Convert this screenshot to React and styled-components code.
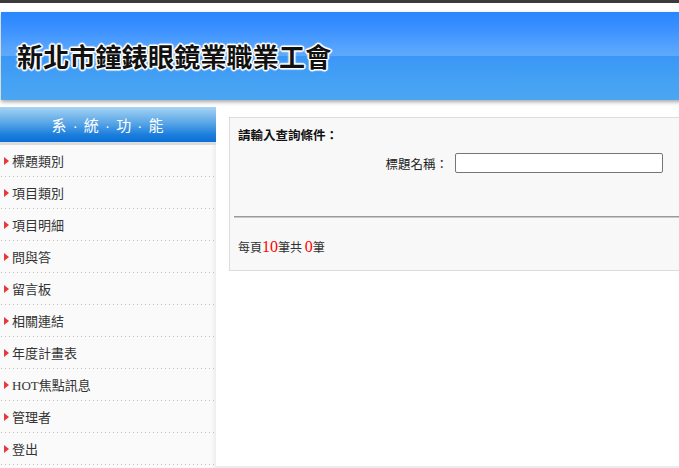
import React from "react";
import styled, { createGlobalStyle } from "styled-components";

const Global = createGlobalStyle`
  html, body { margin: 0; padding: 0; background: #fff; overflow: hidden; }
  body { font-family: "Noto Sans CJK TC", "Noto Sans", sans-serif; color: #222; }
`;

const Page = styled.div`
  width: 1000px;
`;

const TopBar = styled.div`
  height: 3px;
  background: #3b3b3b;
`;

const HeaderWrap = styled.div`
  padding-top: 9px;
`;

const Banner = styled.header`
  height: 88px;
  margin-left: 1px;
  display: flex;
  align-items: center;
  padding-left: 16px;
  background: linear-gradient(
    to bottom,
    #2886ff 0%,
    #3b91ff 20%,
    #55a3fd 40%,
    #5ea9fb 49.5%,
    #3a97f6 50.5%,
    #43a0f4 75%,
    #4ba6f2 100%
  );
  box-shadow: 0 2px 4px rgba(0, 0, 0, 0.35);
`;

const Title = styled.h1`
  margin: 0;
  font-family: "Noto Sans CJK TC", sans-serif;
  font-size: 26px;
  font-weight: 700;
  line-height: 30px;
  color: #111;
  letter-spacing: 0.2px;
  text-shadow:
    1px 0 0 #fff, -1px 0 0 #fff, 0 1px 0 #fff, 0 -1px 0 #fff,
    1px 1px 0 #fff, -1px -1px 0 #fff, 1px -1px 0 #fff, -1px 1px 0 #fff,
    2px 0 1px rgba(255,255,255,.7), -2px 0 1px rgba(255,255,255,.7),
    0 2px 1px rgba(255,255,255,.7), 0 -2px 1px rgba(255,255,255,.7);
`;

const Body = styled.div`
  display: flex;
  margin-top: 7px;
`;

const Sidebar = styled.nav`
  width: 216px;
  flex: none;
  padding-bottom: 3px;
  background: #fafafa;
  box-shadow: inset -4px 0 4px -2px rgba(0, 0, 0, 0.06);
`;

const SideTitle = styled.div`
  height: 35px;
  display: flex;
  align-items: center;
  justify-content: center;
  background: linear-gradient(to bottom, #a6d4f4 0%, #5aa6e6 45%, #1a7ddc 80%, #0a70d6 100%);
  color: #fff;
  font-family: "Liberation Sans", "Noto Sans CJK TC", sans-serif;
  font-size: 15px;
  letter-spacing: 1px;
  border-bottom: 3px solid #dcdcdc;
`;

const MenuList = styled.ul`
  list-style: none;
  margin: 0;
  padding: 0;
`;

const MenuItem = styled.li`
  height: 32px;
  display: flex;
  align-items: center;
  padding-left: 4px;
  padding-bottom: 1px;
  box-sizing: border-box;
  width: 214px;
  font-family: "Liberation Serif", "Noto Sans CJK TC", serif;
  font-size: 13px;
  color: #333;
  background-image: linear-gradient(to right, #bdbdbd 1px, transparent 1px);
  background-size: 4px 1px;
  background-repeat: repeat-x;
  background-position: 1px bottom;
`;

const Arrow = styled.span`
  width: 0;
  height: 0;
  border-left: 5px solid #e8373a;
  border-top: 4.5px solid transparent;
  border-bottom: 4.5px solid transparent;
  margin-right: 3px;
`;

const Main = styled.main`
  flex: 1;
  display: flex;
  flex-direction: column;
`;

const Panel = styled.section`
  margin: 10px 0 0 13px;
  border: 1px solid #dcdcdc;
  background: #f8f8f8;
  height: 152px;
  padding: 0 4px;
`;

const PanelHeading = styled.div`
  padding: 8px 0 0 4px;
  font-size: 12.5px;
  font-weight: 700;
  line-height: 18px;
  color: #111;
`;

const SearchRow = styled.div`
  display: grid;
  grid-template-columns: 214px 208px;
  column-gap: 7px;
  align-items: center;
  margin-top: 9px;
`;

const Label = styled.label`
  text-align: right;
  font-size: 12.5px;
  color: #222;
`;

const TextInput = styled.input`
  box-sizing: border-box;
  height: 20px;
  width: 208px;
  border: 1px solid #767676;
  border-radius: 2px;
  background: #fff;
  padding: 0 3px;
`;

const Divider = styled.hr`
  margin: 43px 0 0 0;
  border: 0;
  border-top: 1px solid #9a9a9a;
  border-bottom: 1px solid #c8c8c8;
  height: 0;
`;

const Count = styled.div`
  padding: 20px 0 0 4px;
  font-size: 12px;
  color: #333;
  line-height: 18px;
`;

const Num = styled.span`
  font-family: "Liberation Serif", serif;
  font-size: 16px;
  color: #ff0000;
`;

const FooterLine = styled.div`
  margin-top: auto;
  height: 2px;
  background: #ececec;
`;

const menu = [
  "標題類別",
  "項目類別",
  "項目明細",
  "問與答",
  "留言板",
  "相關連結",
  "年度計畫表",
  "HOT焦點訊息",
  "管理者",
  "登出",
];

export default function App() {
  return (
    <Page>
      <Global />
      <TopBar />
      <HeaderWrap>
        <Banner>
          <Title>新北市鐘錶眼鏡業職業工會</Title>
        </Banner>
      </HeaderWrap>
      <Body>
        <Sidebar>
          <SideTitle>系 · 統 · 功 · 能</SideTitle>
          <MenuList>
            {menu.map((m) => (
              <MenuItem key={m}>
                <Arrow />
                {m}
              </MenuItem>
            ))}
          </MenuList>
        </Sidebar>
        <Main>
          <Panel>
            <PanelHeading>請輸入查詢條件：</PanelHeading>
            <SearchRow>
              <Label>標題名稱：</Label>
              <TextInput type="text" />
            </SearchRow>
            <Divider />
            <Count>
              每頁<Num>10</Num>筆共 <Num>0</Num>筆
            </Count>
          </Panel>
          <FooterLine />
        </Main>
      </Body>
    </Page>
  );
}
